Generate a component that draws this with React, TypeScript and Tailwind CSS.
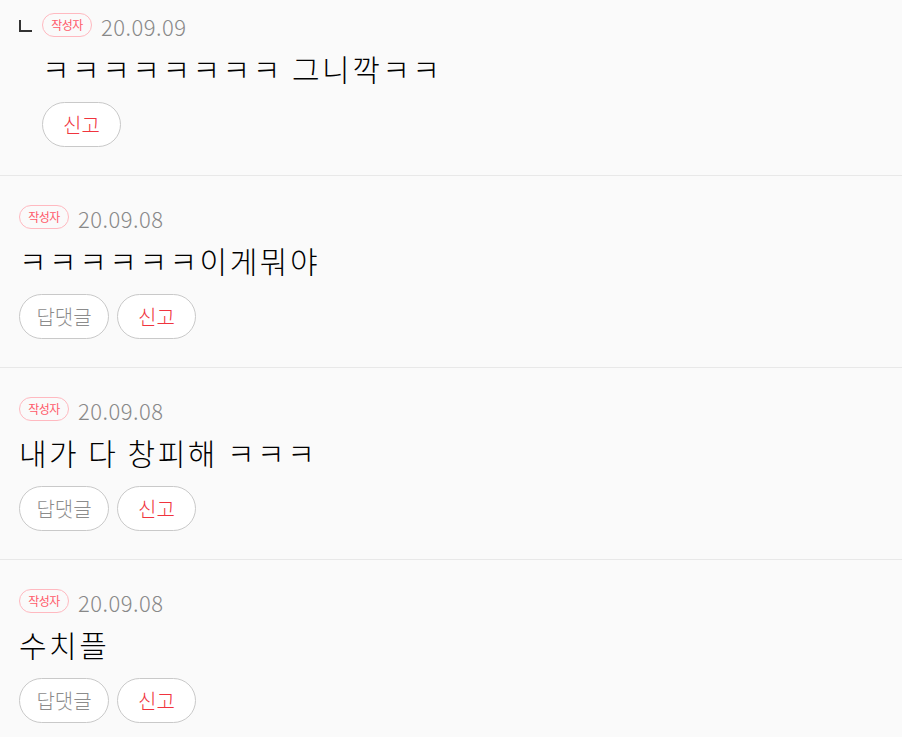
const comments = [
  { date: "20.09.08", text: "ㅋㅋㅋㅋㅋㅋ이게뭐야" },
  { date: "20.09.08", text: "내가 다 창피해 ㅋㅋㅋ" },
  { date: "20.09.08", text: "수치플" },
];

const font = "font-['Noto_Sans_CJK_KR','Noto_Sans',sans-serif]";

function WriterBadge() {
  return (
    <span className="inline-flex h-[24px] w-[50px] items-center justify-center rounded-full border border-[#ffb9c0] text-[12px] leading-none tracking-[-0.5px] text-[#ff5a6a]">
      작성자
    </span>
  );
}

function MetaRow({ date }: { date: string }) {
  return (
    <div className="flex h-[25px] items-center gap-[9px]">
      <WriterBadge />
      <span className="pt-[2px] text-[22px] font-light leading-none tracking-[0.5px] text-[#888]">{date}</span>
    </div>
  );
}

function PillButton({ label, tone }: { label: string; tone: "gray" | "red" }) {
  return (
    <button
      className={
        "h-[45px] rounded-full border border-[#c9c9c9] bg-white text-[20px] font-light leading-none " +
        (tone === "red" ? "w-[79px] text-[#f0343e]" : "w-[90px] text-[#8c8c8c]")
      }
    >
      {label}
    </button>
  );
}

function Body({ text }: { text: string }) {
  return (
    <p className="mt-[11px] h-[40px] text-[30px] font-light leading-[40px] tracking-[2.5px] text-black">
      {text}
    </p>
  );
}

export default function App() {
  return (
    <div className={`min-h-[737px] w-[902px] bg-[#fafafa] ${font}`}>
      {/* reply */}
      <div className="border-b border-[#e8e8e8] pb-[28px] pl-[19px] pt-[12px]">
        <div className="flex items-center gap-[10px]">
          <span className="mt-[2px] block h-[12px] w-[13px] border-b-2 border-l-2 border-[#333]" />
          <MetaRow date="20.09.09" />
        </div>
        <div className="pl-[23px]">
          <Body text="ㅋㅋㅋㅋㅋㅋㅋㅋ 그니깍ㅋㅋ" />
          <div className="mt-[14px] flex gap-[8px]">
            <PillButton label="신고" tone="red" />
          </div>
        </div>
      </div>

      {comments.map((c, i) => (
        <div key={i} className="border-b border-[#e8e8e8] px-[19px] pb-[28px] pt-[28px] last:border-b-0">
          <MetaRow date={c.date} />
          <Body text={c.text} />
          <div className="mt-[14px] flex gap-[8px]">
            <PillButton label="답댓글" tone="gray" />
            <PillButton label="신고" tone="red" />
          </div>
        </div>
      ))}
    </div>
  );
}
